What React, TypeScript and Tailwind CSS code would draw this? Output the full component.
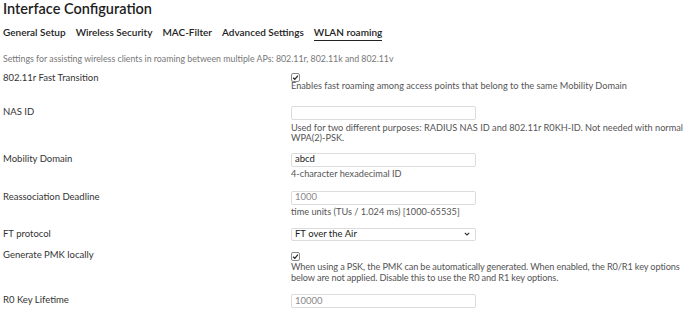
import React from "react";

const font = { fontFamily: "Lato, 'Open Sans', sans-serif" };

function Check() {
  return (
    <div className="w-[9px] h-[9px] border border-[#8a8a8a] rounded-[2px] bg-white flex items-center justify-center">
      <svg width="7" height="7" viewBox="0 0 7 7">
        <path d="M1.1 3.7 L2.8 5.3 L5.9 1.6" fill="none" stroke="#222" strokeWidth="1.2" />
      </svg>
    </div>
  );
}

function Input({ value, placeholder }: { value?: string; placeholder?: string }) {
  return (
    <div
      className={`w-[185px] h-[14px] border border-[#dcdcdc] rounded-[2px] flex items-center px-[3px] text-[9.5px] ${
        value ? "text-[#222]" : "text-[#8a8a8a]"
      }`}
    >
      {value ?? placeholder ?? ""}
    </div>
  );
}

function Label({ children, h = "h-[14px]" }: { children: React.ReactNode; h?: string }) {
  return (
    <div className={`w-[288px] shrink-0 pl-[3px] text-[9.5px] text-[#333] leading-[12px] ${h}`}>{children}</div>
  );
}

const Help = ({ children, className }: { children: React.ReactNode; className?: string }) => (
  <div className={`text-[9.2px] text-[#555] leading-[10.5px] whitespace-nowrap ${className ?? ""}`}>{children}</div>
);

export default function App() {
  return (
    <div className="w-[690px] h-[310px] bg-white overflow-hidden" style={font}>
      <div className="pl-[3px] text-[14.5px] leading-[18px] text-[#1e1e1e] font-semibold">Interface Configuration</div>
      <div className="flex items-start gap-[10px] pl-[3px] mt-[8px] text-[10px] leading-[12px] font-semibold text-[#222]">
        <div className="pb-[3px]">General Setup</div>
        <div className="pb-[3px]">Wireless Security</div>
        <div className="pb-[3px]">MAC-Filter</div>
        <div className="pb-[3px]">Advanced Settings</div>
        <div className="pb-[2px] border-b border-[#222]">WLAN roaming</div>
      </div>
      <div className="pl-[3px] mt-[12px] text-[8.8px] leading-[11px] text-[#777]">
        Settings for assisting wireless clients in roaming between multiple APs: 802.11r, 802.11k and 802.11v
      </div>

      {/* 802.11r Fast Transition */}
      <div className="flex mt-[9px]">
        <Label h="h-[9px]">
          <div className="leading-[9px]">802.11r Fast Transition</div>
        </Label>
        <div className="flex flex-col pl-[3px]">
          <Check />
          <Help className="mt-[-1px]">Enables fast roaming among access points that belong to the same Mobility Domain</Help>
        </div>
      </div>

      {/* NAS ID */}
      <div className="flex mt-[14.5px]">
        <Label>NAS ID</Label>
        <div className="flex flex-col pl-[3px]">
          <Input />
          <Help className="mt-[2.5px]">
            Used for two different purposes: RADIUS NAS ID and 802.11r R0KH-ID. Not needed with normal
            <br />
            WPA(2)-PSK.
          </Help>
        </div>
      </div>

      {/* Mobility Domain */}
      <div className="flex mt-[9px]">
        <Label>Mobility Domain</Label>
        <div className="flex flex-col pl-[3px]">
          <Input value="abcd" />
          <Help className="mt-[2.5px]">4-character hexadecimal ID</Help>
        </div>
      </div>

      {/* Reassociation Deadline */}
      <div className="flex mt-[11px]">
        <Label>Reassociation Deadline</Label>
        <div className="flex flex-col pl-[3px]">
          <Input placeholder="1000" />
          <Help className="mt-[2.5px]">time units (TUs / 1.024 ms) [1000-65535]</Help>
        </div>
      </div>

      {/* FT protocol */}
      <div className="flex mt-[10px]">
        <Label h="h-[13.5px]">FT protocol</Label>
        <div className="flex flex-col pl-[3px]">
          <div className="w-[185px] h-[13.5px] border border-[#dcdcdc] rounded-[2px] flex items-center justify-between pl-[3px] pr-[5px] text-[9.5px] text-[#222]">
            <span>FT over the Air</span>
            <svg width="6" height="4" viewBox="0 0 6 4">
              <path d="M0.8 0.8 L3 3 L5.2 0.8" fill="none" stroke="#333" strokeWidth="1.1" />
            </svg>
          </div>
        </div>
      </div>

      {/* Generate PMK locally */}
      <div className="flex mt-[10.5px]">
        <Label h="h-[9px]">
          <div className="leading-[6px]">Generate PMK locally</div>
        </Label>
        <div className="flex flex-col pl-[3px]">
          <Check />
          <Help className="mt-[1.5px] tracking-[-0.12px]">
            When using a PSK, the PMK can be automatically generated. When enabled, the R0/R1 key options
            <br />
            below are not applied. Disable this to use the R0 and R1 key options.
          </Help>
        </div>
      </div>

      {/* R0 Key Lifetime */}
      <div className="flex mt-[11px]">
        <Label>R0 Key Lifetime</Label>
        <div className="flex flex-col pl-[3px]">
          <Input placeholder="10000" />
        </div>
      </div>
    </div>
  );
}
